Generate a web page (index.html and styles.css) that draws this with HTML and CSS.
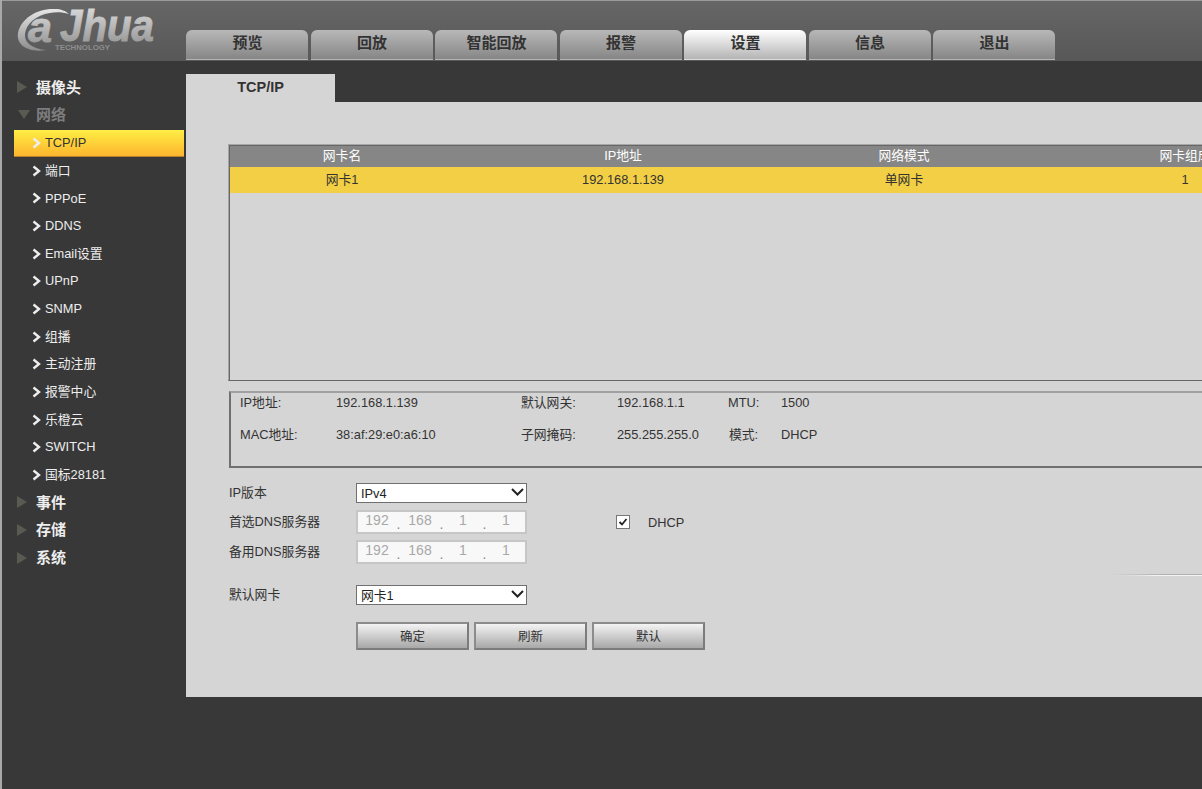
FILE: index.html
```html
<!DOCTYPE html>
<html lang="zh">
<head>
	<meta charset="UTF-8">
	<title>WEB SERVICE</title>
	<link rel="stylesheet" href="styles.css">
</head>
<body>
	<div class="header">
		<svg class="logo" width="170" height="56" viewBox="0 0 170 56">
			<defs>
				<linearGradient id="logoFill" x1="0" y1="0" x2="0" y2="1">
					<stop offset="0" stop-color="#e6e6e6"/>
					<stop offset="1" stop-color="#8c8c8c"/>
				</linearGradient>
			</defs>
			<path fill="url(#logoFill)" d="M46 50C28 53 16 45 18 33C21 18 38 8 55 9C61 9 66 11 69 14C62 12 56 12 50 13C36 15 26 24 25 34C24 43 33 49 46 50Z"/>
			<text class="logo-a" x="28" y="42" textLength="24" lengthAdjust="spacingAndGlyphs" fill="url(#logoFill)" stroke="url(#logoFill)">a</text>
			<text class="logo-word" x="60" y="41" textLength="94" lengthAdjust="spacingAndGlyphs" fill="url(#logoFill)" stroke="url(#logoFill)">Jhua</text>
			<text class="logo-sub" x="55" y="50" textLength="55" lengthAdjust="spacingAndGlyphs">TECHNOLOGY</text>
		</svg>
		<div class="nav">
			<div class="nav-tab">预览</div>
			<div class="nav-tab">回放</div>
			<div class="nav-tab">智能回放</div>
			<div class="nav-tab">报警</div>
			<div class="nav-tab active">设置</div>
			<div class="nav-tab">信息</div>
			<div class="nav-tab">退出</div>
		</div>
	</div>

	<div class="body-wrap">
		<div class="side">
			<div class="side-top"><i class="tri"></i>摄像头</div>
			<div class="side-top open"><i class="tri"></i>网络</div>
			<div class="side-sub active"><svg class="chev" width="9" height="12" viewBox="0 0 9 12"><path d="M1.5 1.5L7 6L1.5 10.500"/></svg>TCP/IP</div>
			<div class="side-sub"><svg class="chev" width="9" height="12" viewBox="0 0 9 12"><path d="M1.5 1.5L7 6L1.5 10.500"/></svg>端口</div>
			<div class="side-sub"><svg class="chev" width="9" height="12" viewBox="0 0 9 12"><path d="M1.5 1.5L7 6L1.5 10.500"/></svg>PPPoE</div>
			<div class="side-sub"><svg class="chev" width="9" height="12" viewBox="0 0 9 12"><path d="M1.5 1.5L7 6L1.5 10.500"/></svg>DDNS</div>
			<div class="side-sub"><svg class="chev" width="9" height="12" viewBox="0 0 9 12"><path d="M1.5 1.5L7 6L1.5 10.500"/></svg>Email设置</div>
			<div class="side-sub"><svg class="chev" width="9" height="12" viewBox="0 0 9 12"><path d="M1.5 1.5L7 6L1.5 10.500"/></svg>UPnP</div>
			<div class="side-sub"><svg class="chev" width="9" height="12" viewBox="0 0 9 12"><path d="M1.5 1.5L7 6L1.5 10.500"/></svg>SNMP</div>
			<div class="side-sub"><svg class="chev" width="9" height="12" viewBox="0 0 9 12"><path d="M1.5 1.5L7 6L1.5 10.500"/></svg>组播</div>
			<div class="side-sub"><svg class="chev" width="9" height="12" viewBox="0 0 9 12"><path d="M1.5 1.5L7 6L1.5 10.500"/></svg>主动注册</div>
			<div class="side-sub"><svg class="chev" width="9" height="12" viewBox="0 0 9 12"><path d="M1.5 1.5L7 6L1.5 10.500"/></svg>报警中心</div>
			<div class="side-sub"><svg class="chev" width="9" height="12" viewBox="0 0 9 12"><path d="M1.5 1.5L7 6L1.5 10.500"/></svg>乐橙云</div>
			<div class="side-sub"><svg class="chev" width="9" height="12" viewBox="0 0 9 12"><path d="M1.5 1.5L7 6L1.5 10.500"/></svg>SWITCH</div>
			<div class="side-sub"><svg class="chev" width="9" height="12" viewBox="0 0 9 12"><path d="M1.5 1.5L7 6L1.5 10.500"/></svg>国标28181</div>
			<div class="side-top"><i class="tri"></i>事件</div>
			<div class="side-top"><i class="tri"></i>存储</div>
			<div class="side-top"><i class="tri"></i>系统</div>
		</div>

		<div class="main">
			<div class="tab-bar"><div class="tab">TCP/IP</div></div>
			<div class="panel">
				<div class="net-table">
					<div class="net-row net-head">
						<div>网卡名</div><div>IP地址</div><div>网络模式</div><div>网卡组成</div>
					</div>
					<div class="net-row net-sel">
						<div>网卡1</div><div>192.168.1.139</div><div>单网卡</div><div>1</div>
					</div>
				</div>

				<div class="info">
					<div>IP地址:</div><div>192.168.1.139</div><div>默认网关:</div><div>192.168.1.1</div><div>MTU:</div><div>1500</div>
					<div>MAC地址:</div><div>38:af:29:e0:a6:10</div><div>子网掩码:</div><div>255.255.255.0</div><div class="mode">模式:</div><div>DHCP</div>
				</div>

				<div class="form">
					<label class="row-ver">IP版本</label>
					<div class="sel-wrap">
						<select class="sel"><option>IPv4</option></select>
						<svg class="sel-arrow" width="13" height="8" viewBox="0 0 13 8"><path d="M1 1L6.500 6.500L12 1"/></svg>
					</div>
					<div></div>

					<label class="row-dns">首选DNS服务器</label>
					<div class="ip-box">
						<span>192</span><b>.</b><span>168</span><b>.</b><span>1</span><b>.</b><span>1</span>
					</div>
					<div class="dhcp">
						<span class="check"><svg width="10" height="10" viewBox="0 0 10 10"><path d="M1.500 5L4 7.500L8.500 2"/></svg></span>
						DHCP
					</div>

					<label class="row-dns">备用DNS服务器</label>
					<div class="ip-box">
						<span>192</span><b>.</b><span>168</span><b>.</b><span>1</span><b>.</b><span>1</span>
					</div>
					<div></div>

					<label class="row-nic">默认网卡</label>
					<div class="sel-wrap">
						<select class="sel"><option>网卡1</option></select>
						<svg class="sel-arrow" width="13" height="8" viewBox="0 0 13 8"><path d="M1 1L6.500 6.500L12 1"/></svg>
					</div>
				</div>

				<div class="btns">
					<button class="btn">确定</button>
					<button class="btn">刷新</button>
					<button class="btn">默认</button>
				</div>

				<div class="fade-line"></div>
			</div>
		</div>
	</div>
</body>
</html>
```

FILE: styles.css
```css
html,body{
	margin:0;
	padding:0;
	height:100%;
}
body{
	width:1200px;
	height:789px;
	overflow:hidden;
	background:#383838;
	border-left:2px solid #a8a8a8;
	font:12.800px "Liberation Sans","Noto Sans CJK SC",sans-serif;
	color:#333;
}

/* header */
.header{
	display:flex;
	align-items:flex-end;
	height:60px;
	border-top:1px solid #9a9a9a;
	background:linear-gradient(#666,#585858);
	position:relative;
}
.logo{
	position:absolute;
	left:-2px;
	top:-1px;
}
.logo-a{
	font:italic bold 42px "Liberation Sans",sans-serif;
	stroke-width:.8;
}
.logo-word{
	font:italic bold 45px "Liberation Sans",sans-serif;
	stroke-width:1;
}
.logo-sub{
	font:bold 8px "Liberation Sans",sans-serif;
	fill:#8e8e8e;
}
.nav{
	display:flex;
	gap:2.5px;
	margin:0 0 1px 184px;
}
.nav-tab{
	width:121px;
	height:29px;
	padding-left:1px;
	line-height:26px;
	text-align:center;
	font-size:15px;
	font-weight:bold;
	color:#333;
	border-radius:6px 6px 0 0;
	border-bottom:1px solid #b4b4b4;
	background:linear-gradient(#b8b8b8,#868686);
}
.nav-tab.active{
	background:linear-gradient(#fff,#b4b4b4);
	border-bottom-color:#ddd;
}

.body-wrap{
	display:flex;
}

/* left menu */
.side{
	width:184px;
	flex:none;
	padding-top:12.5px;
}
.side-top,.side-sub{
	display:flex;
	align-items:center;
	height:27.65px;
	line-height:27.65px;
	color:#eee;
}
.side-top{
	padding-left:15px;
	font-size:15px;
	font-weight:bold;
}
.side-top.open{
	color:#7d7d7d;
}
.tri{
	width:0;
	height:0;
	margin-right:9px;
	border-style:solid;
	border-width:6.500px 0 6.500px 10px;
	border-color:transparent transparent transparent #5a5a52;
}
.side-top.open .tri{
	margin:0 6px 0 1px;
	border-width:9px 6px 0 6px;
	border-color:#5a5a52 transparent transparent transparent;
}
.side-sub{
	padding-left:30px;
}
.side-sub.active{
	width:170px;
	height:26.65px;
	margin:1.5px 0 0 12px;
	padding-left:18px;
	box-sizing:border-box;
	color:#333;
	background:linear-gradient(#ffee44,#fdb52e);
	border-bottom:1px solid #b8802a;
}
.chev{
	margin-right:4px;
	flex:none;
}
.chev path{
	fill:none;
	stroke:#eee;
	stroke-width:2.400;
}

/* main */
.main{
	width:1016px;
	padding-top:13px;
	overflow:hidden;
}
.tab-bar{
	height:28px;
	background:#383838;
}
.tab{
	width:149px;
	height:28px;
	box-sizing:border-box;
	line-height:26px;
	text-align:center;
	font-size:14.500px;
	font-weight:bold;
	background:#d5d5d5;
}
.panel{
	position:relative;
	height:553px;
	padding:42px 0 0 43px;
	background:#d5d5d5;
}

/* network table */
.net-table{
	width:1125px;
	height:237px;
	margin-left:-1px;
	border-top:1px solid #a6a6a6;
	border-left:1px solid #a6a6a6;
	border-bottom:1px solid #666;
	box-shadow:inset 1px 1px 0 #666;
	padding:1px 0 0 1px;
	box-sizing:border-box;
}
.net-row{
	display:grid;
	grid-template-columns:224px 338px 224px 338px;
	text-align:center;
}
.net-head{
	height:21px;
	line-height:20px;
	color:#fff;
	background:#868686;
}
.net-sel{
	height:26px;
	line-height:25px;
	background:#f2cf45;
}

/* info box */
.info{
	display:grid;
	grid-template-columns:96px 185px 96px 111px 53px 200px;
	grid-auto-rows:18px;
	row-gap:14px;
	width:1124px;
	height:77px;
	margin-top:10px;
	padding:1px 0 0 9px;
	box-sizing:border-box;
	border-top:2px solid #a0a0a0;
	border-left:2px solid #707070;
	border-bottom:2px solid #707070;
	line-height:18px;
}
.info .mode{
	padding-left:1px;
}

/* form */
.form{
	display:grid;
	grid-template-columns:127px 171px 300px;
	grid-template-rows:27px 30px 45px 20px;
	align-items:start;
	margin-top:15px;
}
.row-ver{
	line-height:19px;
}
.row-dns{
	line-height:24px;
}
.row-nic{
	line-height:20px;
}
.sel-wrap{
	position:relative;
	height:20px;
}
.sel{
	display:block;
	width:171px;
	height:20px;
	padding:0 0 0 4px;
	border:1px solid #707070;
	border-radius:0;
	background:#fff;
	color:#222;
	appearance:none;
	font:12.800px "Liberation Sans","Noto Sans CJK SC",sans-serif;
}
.sel-arrow{
	position:absolute;
	right:3px;
	top:5px;
	pointer-events:none;
}
.sel-arrow path{
	fill:none;
	stroke:#222;
	stroke-width:2;
}
.ip-box{
	display:flex;
	width:171px;
	height:24px;
	box-sizing:border-box;
	border:2px solid #c6c6c6;
	background:#f8f8f8;
	color:#a8a8a8;
	font-size:14px;
	line-height:17px;
}
.ip-box span{
	width:38px;
	text-align:center;
}
.ip-box b{
	width:5px;
	font-weight:normal;
	text-align:center;
	line-height:25px;
	color:#888;
}
.dhcp{
	display:flex;
	align-items:center;
	height:24px;
	padding-left:89px;
	white-space:nowrap;
}
.check{
	display:flex;
	align-items:center;
	justify-content:center;
	width:12px;
	height:12px;
	margin-right:18px;
	border:1px solid #777;
	background:#fff;
}
.check path{
	fill:none;
	stroke:#222;
	stroke-width:1.800;
}

/* buttons */
.btns{
	display:flex;
	gap:5px;
	margin:17px 0 0 127px;
}
.btn{
	width:113px;
	height:28px;
	padding:0 0 2px;
	box-sizing:border-box;
	border:2px solid #7c7c7c;
	border-top-color:#8c8c8c;
	border-left-color:#8c8c8c;
	background:linear-gradient(#f4f4f4,#a8a8a8);
	color:#333;
	font:12.500px "Liberation Sans","Noto Sans CJK SC",sans-serif;
}

.fade-line{
	position:absolute;
	right:0;
	top:472px;
	width:92px;
	height:1px;
	background:linear-gradient(to right,rgba(170,170,170,0),#b0b0b0 60%);
	border-bottom:1px solid #eee;
	border-image:linear-gradient(to right,rgba(238,238,238,0),#f4f4f4 50%) 1;
}
```
